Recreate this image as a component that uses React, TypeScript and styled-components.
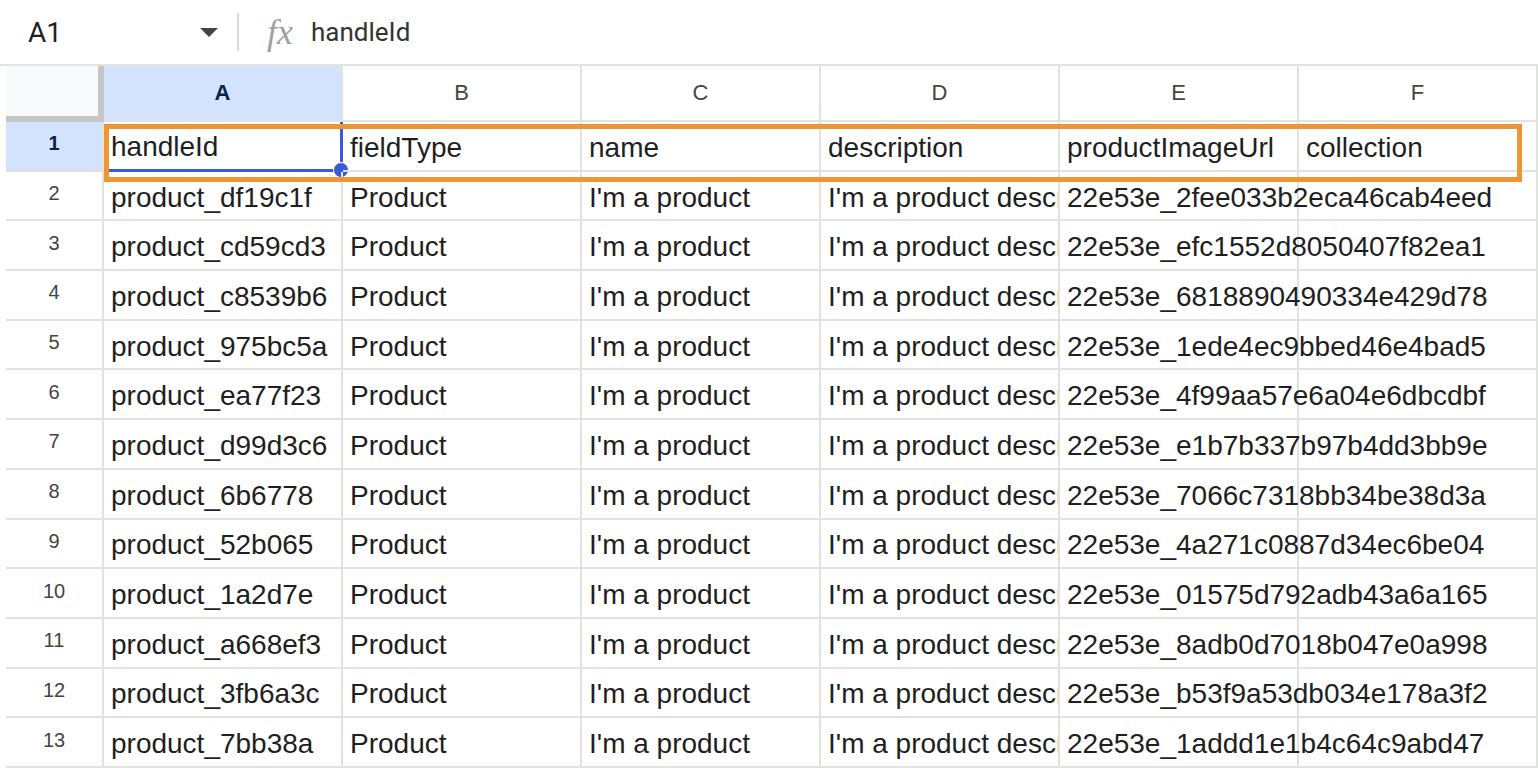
import styled, { createGlobalStyle } from "styled-components";

const Global = createGlobalStyle`
  body { margin: 0; background: #fff; font-family: "Liberation Sans", Arial, sans-serif; overflow: hidden; }
`;

const Page = styled.div`
  width: 1538px;
  height: 768px;
  overflow: hidden;
`;

const FormulaBar = styled.div`
  height: 64px;
  display: flex;
  align-items: center;
  border-bottom: 2px solid #e1e3e1;
`;

const NameBox = styled.div`
  width: 200px;
  padding-left: 28px;
  display: flex;
  align-items: center;
  justify-content: space-between;
  font-family: Roboto, sans-serif;
  font-size: 28px;
  color: #1f1f1f;
  box-sizing: border-box;
`;

const Caret = styled.div`
  width: 0;
  height: 0;
  border-left: 9px solid transparent;
  border-right: 9px solid transparent;
  border-top: 9px solid #444;
  margin-right: -18px;
`;

const Divider = styled.div`
  width: 2px;
  height: 38px;
  background: #dadce0;
  margin-left: 37px;
  margin-right: 28px;
`;

const Fx = styled.span`
  font-family: "Liberation Serif", serif;
  font-style: italic;
  font-size: 36px;
  color: #a0a0a0;
  margin-right: 18px;
`;

const FormulaText = styled.span`
  font-family: Roboto, sans-serif;
  font-size: 26px;
  color: #333;
`;

const Grid = styled.div`
  margin-left: 6px;
  display: grid;
  grid-template-columns: 98px repeat(6, 239px);
  grid-auto-rows: 49.7px;
  grid-template-rows: 56px;
  position: relative;
`;

const Corner = styled.div`
  background: #f8f9fa;
  border-right: 6px solid #c4c7c5;
  border-bottom: 6px solid #c4c7c5;
  box-sizing: border-box;
`;

const ColHead = styled.div<{ $sel?: boolean }>`
  background: ${(p) => (p.$sel ? "#d3e3fd" : "#fff")};
  border-right: 2px solid #e1e3e1;
  border-bottom: 2px solid #e1e3e1;
  display: flex;
  align-items: center;
  justify-content: center;
  font-size: 22px;
  font-weight: ${(p) => (p.$sel ? 700 : 400)};
  color: ${(p) => (p.$sel ? "#0b1f4a" : "#444")};
  box-sizing: border-box;
`;

const RowHead = styled(ColHead)`
  font-size: 20px;
  padding-bottom: 4px;
`;

const Cell = styled.div<{ $spill?: boolean }>`
  position: relative;
  z-index: ${(p) => (p.$spill ? 1 : 0)};
  border-right: 2px solid #e1e3e1;
  border-bottom: 2px solid #e1e3e1;
  display: flex;
  align-items: center;
  padding: 4px 0 0 7px;
  font-size: 28px;
  color: #1f1f1f;
  white-space: nowrap;
  overflow: ${(p) => (p.$spill ? "visible" : "hidden")};
  box-sizing: border-box;
`;

const SelCell = styled(Cell)`
  overflow: visible;
  border-right: 3px solid #3a5ad9;
  border-bottom: 3px solid #3a5ad9;
`;

const Handle = styled.div`
  position: absolute;
  right: -9px;
  bottom: -9px;
  width: 14px;
  height: 14px;
  border-radius: 50%;
  background: #3a5ad9;
  border: 1px solid #fff;
`;

const Highlight = styled.div`
  position: absolute;
  left: 98px;
  top: 58px;
  width: 1418px;
  height: 58px;
  box-sizing: border-box;
  border: 5px solid #ef9535;
  pointer-events: none;
  z-index: 2;
`;

const headers = ["handleId", "fieldType", "name", "description", "productImageUrl", "collection"];
const ids = ["df19c1f", "cd59cd3", "c8539b6", "975bc5a", "ea77f23", "d99d3c6", "6b6778", "52b065", "1a2d7e", "a668ef3", "3fb6a3c", "7bb38a"];
const imgs = [
  "2fee033b2eca46cab4eed", "efc1552d8050407f82ea1", "6818890490334e429d78", "1ede4ec9bbed46e4bad5",
  "4f99aa57e6a04e6dbcdbf", "e1b7b337b97b4dd3bb9e", "7066c7318bb34be38d3a", "4a271c0887d34ec6be04",
  "01575d792adb43a6a165", "8adb0d7018b047e0a998", "b53f9a53db034e178a3f2", "1addd1e1b4c64c9abd47",
];

export default function App() {
  return (
    <Page>
      <Global />
      <FormulaBar>
        <NameBox>
          A1
          <Caret />
        </NameBox>
        <Divider />
        <Fx>fx</Fx>
        <FormulaText>handleId</FormulaText>
      </FormulaBar>
      <Grid>
        <Corner />
        {["A", "B", "C", "D", "E", "F"].map((c, i) => (
          <ColHead key={c} $sel={i === 0}>{c}</ColHead>
        ))}
        <RowHead $sel>1</RowHead>
        {headers.map((h, i) =>
          i === 0 ? (
            <SelCell key={h}>
              {h}
              <Handle />
            </SelCell>
          ) : (
            <Cell key={h}>{h}</Cell>
          )
        )}
        {ids.map((id, r) => [
          <RowHead key={`h${r}`}>{r + 2}</RowHead>,
          <Cell key={`a${r}`}>product_{id}</Cell>,
          <Cell key={`b${r}`}>Product</Cell>,
          <Cell key={`c${r}`}>I'm a product</Cell>,
          <Cell key={`d${r}`}>I'm a product description</Cell>,
          <Cell key={`e${r}`} $spill>22e53e_{imgs[r]}</Cell>,
          <Cell key={`f${r}`}></Cell>,
        ])}
        <Highlight />
      </Grid>
    </Page>
  );
}
